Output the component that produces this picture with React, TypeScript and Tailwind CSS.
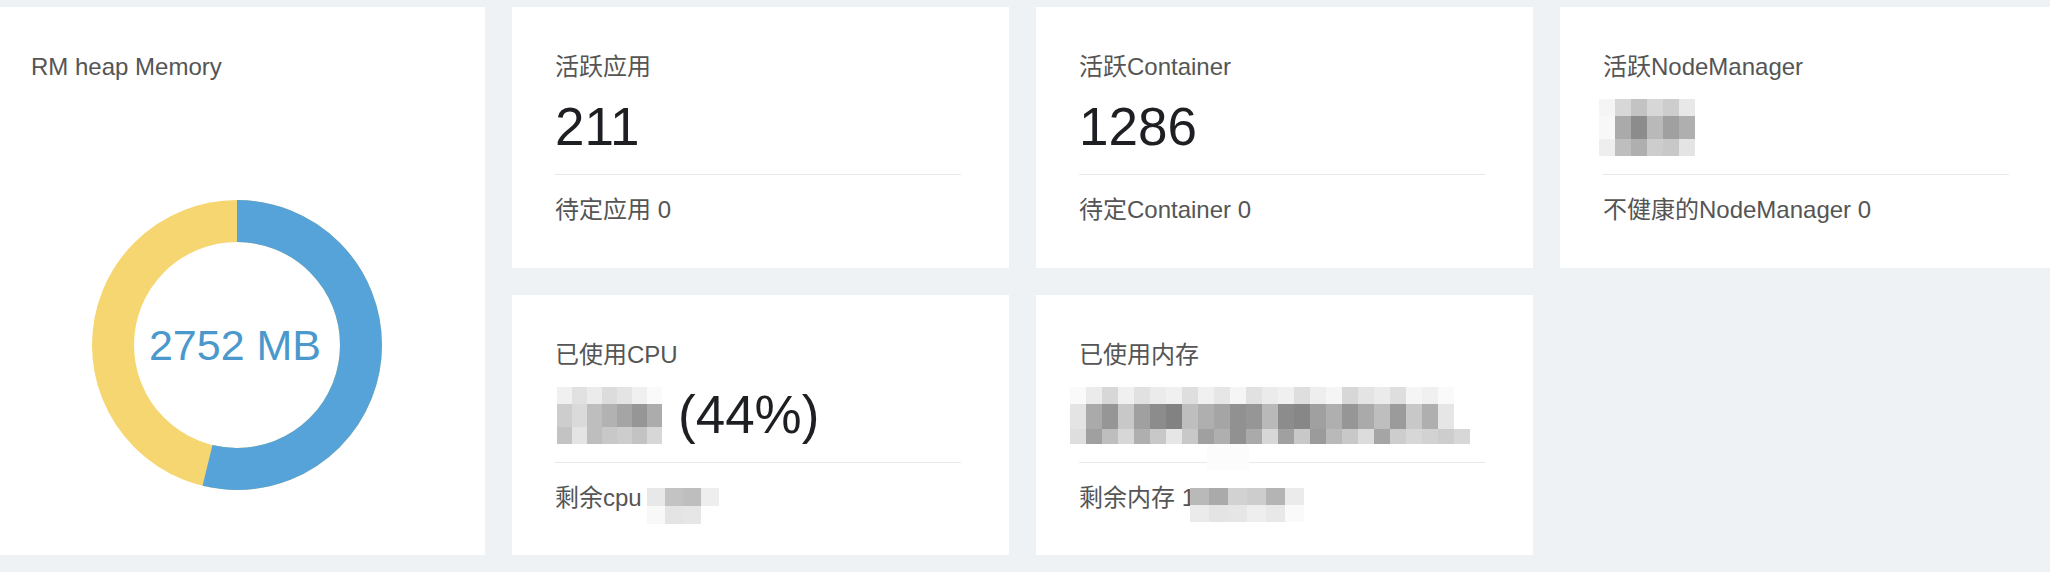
import React from "react";

type MosaicProps = {
  cw: number;
  rh: number[];
  cells: number[][];
};

function Mosaic({ cw, rh, cells }: MosaicProps) {
  return (
    <div className="flex flex-col shrink-0">
      {cells.map((row, r) => (
        <div key={r} className="flex">
          {row.map((v, c) => (
            <div
              key={c}
              style={{
                width: cw,
                height: rh[r],
                backgroundColor: `rgb(${v},${v},${v})`,
              }}
            />
          ))}
        </div>
      ))}
    </div>
  );
}

const FONT = "font-['Liberation_Sans','Noto_Sans_CJK_SC',sans-serif]";

type StatProps = {
  label: string;
  value: React.ReactNode;
  sub: React.ReactNode;
};

function StatCard({ label, value, sub }: StatProps) {
  return (
    <div className="bg-white pt-[44px] pl-[43px] pr-[48px] overflow-hidden">
      <div className="text-[24px] leading-[32px] text-[#555555] whitespace-nowrap">{label}</div>
      <div className="mt-[14px] h-[60px] flex items-center text-[53px] leading-[60px] text-[#1d1f22] whitespace-nowrap">
        {value}
      </div>
      <div className="mt-[17px] border-t border-[#e7ebef]" />
      <div className="mt-[19px] flex items-start text-[24px] leading-[32px] text-[#555555] whitespace-nowrap">
        {sub}
      </div>
    </div>
  );
}

function Donut() {
  const r = 124;
  const c = 2 * Math.PI * r;
  const blue = 0.538 * c;
  return (
    <div className="relative w-[290px] h-[290px]">
      <svg width="290" height="290" viewBox="0 0 290 290">
        <circle cx="145" cy="145" r={r} fill="none" stroke="#f5d670" strokeWidth="42" />
        <circle
          cx="145"
          cy="145"
          r={r}
          fill="none"
          stroke="#55a3d9"
          strokeWidth="42"
          strokeDasharray={`${blue} ${c}`}
          transform="rotate(-90 145 145)"
        />
      </svg>
      <div className="absolute inset-0 flex items-center justify-center pr-[4px]">
        <span className="text-[43px] leading-none text-[#4a98cc]">2752 MB</span>
      </div>
    </div>
  );
}

export default function App() {
  return (
    <div className={`w-[2050px] h-[572px] overflow-hidden bg-[#eef2f5] pt-[7px] ${FONT}`}>
      <div className="grid grid-cols-[485px_497px_497px_497px] grid-rows-[261px_260px] gap-x-[27px] gap-y-[27px]">
        {/* Left card */}
        <div className="row-span-2 bg-white pt-[44px] pl-[31px]">
          <div className="text-[24px] leading-[32px] text-[#555555]">RM heap Memory</div>
          <div className="mt-[117px] ml-[61px]">
            <Donut />
          </div>
        </div>

        <StatCard label="活跃应用" value="211" sub="待定应用 0" />
        <StatCard label="活跃Container" value="1286" sub="待定Container 0" />
        <StatCard
          label="活跃NodeManager"
          value={
            <div className="-ml-[4px]">
              <Mosaic
                cw={16}
                rh={[17, 23, 17]}
                cells={[
                  [245, 215, 195, 215, 205, 232],
                  [248, 170, 140, 185, 160, 175],
                  [238, 190, 175, 205, 200, 228],
                ]}
              />
            </div>
          }
          sub="不健康的NodeManager 0"
        />

        <StatCard
          label="已使用CPU"
          value={
            <>
              <div className="ml-[2px]">
                <Mosaic
                  cw={15}
                  rh={[17, 23, 17]}
                  cells={[
                    [240, 225, 235, 220, 228, 240, 250],
                    [205, 218, 190, 178, 165, 150, 172],
                    [195, 228, 190, 200, 205, 195, 215],
                  ]}
                />
              </div>
              <span className="ml-[16px]">(44%)</span>
            </>
          }
          sub={
            <>
              <span>剩余cpu</span>
              <div className="ml-[5px] mt-[6px]">
                <Mosaic
                  cw={18}
                  rh={[18, 18]}
                  cells={[
                    [232, 195, 190, 238],
                    [248, 228, 230, 255],
                  ]}
                />
              </div>
            </>
          }
        />
        <StatCard
          label="已使用内存"
          value={
            <div className="relative -ml-[9px]">
              <Mosaic
                cw={16}
                rh={[17, 25, 15]}
                cells={[
                  [250, 235, 215, 240, 225, 235, 240, 222, 240, 230, 245, 225, 235, 240, 222, 238, 245, 215, 228, 235, 222, 245, 240, 250, 255],
                  [228, 170, 150, 200, 160, 140, 130, 190, 175, 165, 145, 150, 185, 140, 135, 160, 175, 150, 170, 190, 155, 200, 175, 230, 255],
                  [222, 160, 190, 215, 175, 200, 230, 200, 160, 175, 145, 170, 215, 160, 200, 155, 185, 200, 220, 165, 205, 215, 210, 205, 215],
                ]}
              />
              <div className="absolute left-[137px] top-[57px] w-[42px] h-[26px] bg-[#fcfcfc]" />
            </div>
          }
          sub={
            <>
              <span>剩余内存 1</span>
              <div className="-ml-[5px] mt-[6px]">
                <Mosaic
                  cw={19}
                  rh={[17, 17]}
                  cells={[
                    [185, 170, 210, 205, 180, 235],
                    [235, 228, 230, 238, 232, 250],
                  ]}
                />
              </div>
            </>
          }
        />
        <div />
      </div>
    </div>
  );
}
